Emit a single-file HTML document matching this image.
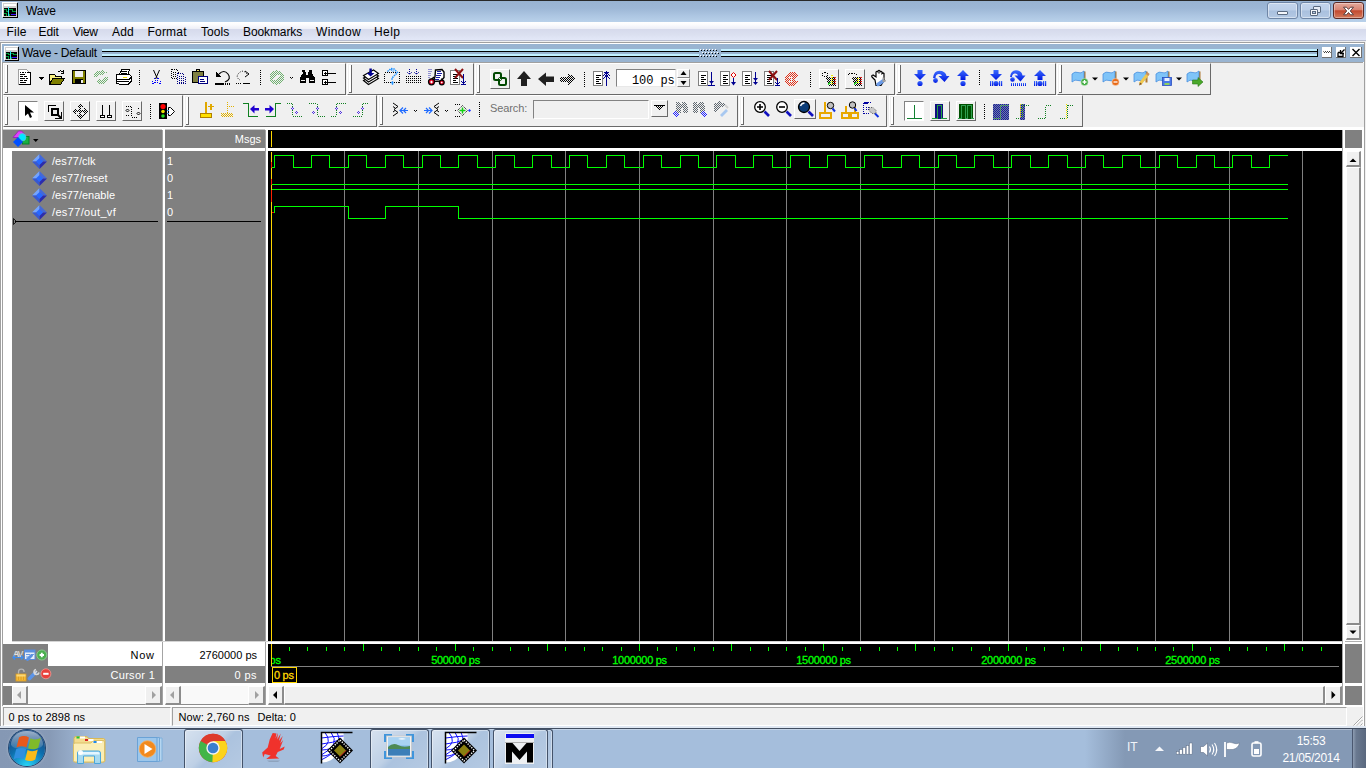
<!DOCTYPE html>
<html><head><meta charset="utf-8"><title>Wave</title>
<style>
*{box-sizing:border-box;margin:0;padding:0}
html,body{width:1366px;height:768px;overflow:hidden;background:#f0f0f0;font-family:"Liberation Sans",sans-serif;font-size:11px;color:#000}
.a{position:absolute}
.t{position:absolute;white-space:nowrap;line-height:1}
svg{position:absolute;overflow:visible}
.gray{background:#808080}
.blk{background:#000}
.wht{background:#fff}
#title{left:0;top:0;width:1366px;height:22px;background:linear-gradient(#98b3d2 0,#9db7d6 35%,#adc6e2 70%,#b9d1ea 100%);border-top:1px solid #282828}
#menu{left:0;top:22px;width:1366px;height:18px;background:linear-gradient(#ffffff 0,#fbfbfd 15%,#eceef7 40%,#d6daec 41%,#dbe0f0 70%,#e3e8f8 100%)}
.mi{top:26px;font-size:12px}
#pane{left:2px;top:43px;width:1362px;height:19px;background:#99b4d1;border-top:1px solid #fff}
.tb{position:absolute;height:32px;border-top:1px solid #fff;border-left:1px solid #fff;border-right:1px solid #696969;border-bottom:1px solid #696969;background:#f0f0f0}
.hd{position:absolute;left:1px;top:1px;width:3px;height:28px;background:#696969;border-left:2px solid #fff}
.hd:after{content:"";position:absolute;left:-2px;bottom:0;width:3px;height:1px;background:#696969}
.btn{position:absolute;width:20px;height:20px;border-top:1px solid #fff;border-left:1px solid #fff;border-right:1px solid #696969;border-bottom:1px solid #696969;background:#f0f0f0}
.sep{position:absolute;width:1px;height:15px;background:repeating-linear-gradient(#000 0,#000 1px,transparent 1px,transparent 2px)}
.tl{font-size:11px;color:#00ff00;letter-spacing:-0.3px;-webkit-text-stroke:0.3px #00ff00}
.sn{font-size:11px;color:#fff}
.sbb{width:16px;height:18px;background:#f0f0f0;border-top:1px solid #fff;border-left:1px solid #fff;border-right:1px solid #808080;border-bottom:1px solid #808080}
.tbtn{top:729px;height:40px;border:1px solid #44536a;border-bottom:none;border-radius:3px 3px 0 0;background:linear-gradient(135deg,rgba(255,255,255,.55) 0,rgba(255,255,255,.28) 45%,rgba(255,255,255,.08) 55%,rgba(255,255,255,.18) 100%),#a5bedc;box-shadow:inset 0 0 0 1px rgba(255,255,255,.4)}
.vsb{width:15px;background:#f0f0f0;border-top:1px solid #fff;border-left:1px solid #fff;border-right:2px solid #8c8c8c;border-bottom:2px solid #8c8c8c}
.hsb{height:19px;background:#f0f0f0;border-top:1px solid #fff;border-left:1px solid #fff;border-right:2px solid #8c8c8c;border-bottom:2px solid #8c8c8c}
</style></head><body>
<!-- TITLE BAR -->
<div class="a" id="title"></div>
<svg style="left:2px;top:2px" width="16" height="16" viewBox="0 0 16 16" shape-rendering="crispEdges">
<rect x="0" y="0" width="15" height="15" fill="#fff"/><rect x="1" y="1" width="15" height="15" fill="#000"/>
<rect x="1" y="1" width="14" height="14" fill="#d0d0d0"/>
<rect x="2" y="2" width="12" height="2" fill="#fff"/>
<rect x="2" y="6" width="12" height="8" fill="#000"/>
<path d="M2 7.500h3M4.500 7v3M4 9.500h2M7 7.500h4M10.500 7v3M10 9.500h4M2 11.500h3M4.500 11v3M7.500 12v2" stroke="#00a040" fill="none" stroke-width="1"/>
<rect x="6" y="5" width="1" height="9" fill="#30e0f0"/>
<rect x="9" y="12" width="5" height="1" fill="#4010ff"/>
</svg>
<div class="t" style="left:26px;top:5px;font-size:12px;letter-spacing:-0.1px">Wave</div>
<!-- window buttons -->
<div class="a" style="left:1267px;top:2px;width:31px;height:17px;border:1px solid #6f86a6;border-radius:3px;background:linear-gradient(#c3d5ec 0,#bccfe8 48%,#a9c0de 52%,#b4c9e4 100%);box-shadow:inset 0 0 0 1px rgba(255,255,255,.45)"></div>
<div class="a" style="left:1277px;top:11px;width:11px;height:4px;border:1px solid #5a6a80;border-radius:1px;background:#f4f6fa"></div>
<div class="a" style="left:1300px;top:2px;width:31px;height:17px;border:1px solid #6f86a6;border-radius:3px;background:linear-gradient(#c3d5ec 0,#bccfe8 48%,#a9c0de 52%,#b4c9e4 100%);box-shadow:inset 0 0 0 1px rgba(255,255,255,.45)"></div>
<div class="a" style="left:1313px;top:6px;width:8px;height:7px;border:1px solid #5a6a80;border-radius:1px;background:#e6ecf5"></div>
<div class="a" style="left:1310px;top:9px;width:8px;height:7px;border:1px solid #5a6a80;border-radius:1px;background:#f4f6fa"></div>
<div class="a" style="left:1312px;top:11px;width:4px;height:3px;border:1px solid #5a6a80;background:#b8cbe4"></div>
<div class="a" style="left:1333px;top:2px;width:31px;height:17px;border:1px solid #5c2a26;border-radius:3px;background:linear-gradient(#e3a99c 0,#d98573 45%,#c3492f 52%,#d37a5c 100%);box-shadow:inset 0 0 0 1px rgba(255,255,255,.35)"></div>
<svg style="left:1342px;top:6px" width="13" height="10" viewBox="0 0 13 10"><path d="M1.5 1.2h3l2 2.2 2-2.2h3L8.3 5l3.2 3.8h-3l-2-2.3-2 2.3h-3L4.7 5z" fill="#fff" stroke="#5b4040" stroke-width="1"/></svg>
<!-- MENU -->
<div class="a" id="menu"></div>
<div class="a" style="left:0;top:40px;width:1366px;height:1px;background:#b8bdd0"></div>
<div class="a" style="left:0;top:41px;width:1366px;height:1px;background:#f0f0f0"></div>
<div class="t mi" style="left:6.500px;letter-spacing:0.2px">File</div>
<div class="t mi" style="left:38.500px;letter-spacing:-0.1px">Edit</div>
<div class="t mi" style="left:73px;letter-spacing:-0.3px">View</div>
<div class="t mi" style="left:112px;letter-spacing:0.2px">Add</div>
<div class="t mi" style="left:147.500px;letter-spacing:0.2px">Format</div>
<div class="t mi" style="left:201px;letter-spacing:0.05px">Tools</div>
<div class="t mi" style="left:243px;letter-spacing:-0.1px">Bookmarks</div>
<div class="t mi" style="left:316px;letter-spacing:0.4px">Window</div>
<div class="t mi" style="left:374px;letter-spacing:0.45px">Help</div>
<!-- PANE TITLE -->
<div class="a" style="left:0;top:42px;width:1365px;height:1px;background:#a0a0a0"></div>
<div class="a" style="left:0;top:42px;width:1px;height:686px;background:#a0a0a0"></div>
<div class="a" style="left:1px;top:43px;width:1px;height:684px;background:#fff"></div>
<div class="a" style="left:1364px;top:42px;width:1px;height:686px;background:#a0a0a0"></div>
<div class="a" style="left:1363px;top:62px;width:1px;height:665px;background:#fff"></div>
<div class="a" style="left:2px;top:62px;width:1361px;height:1px;background:#a0a0a0"></div>
<div class="a" style="left:2px;top:62px;width:1px;height:644px;background:#a0a0a0"></div>
<div class="a" id="pane"></div>
<svg style="left:4px;top:46px" width="15" height="15" viewBox="0 0 16 16" preserveAspectRatio="none" shape-rendering="crispEdges">
<rect x="0" y="0" width="15" height="15" fill="#fff"/><rect x="1" y="1" width="15" height="15" fill="#000"/>
<rect x="1" y="1" width="14" height="14" fill="#d0d0d0"/>
<rect x="2" y="2" width="12" height="2" fill="#fff"/>
<rect x="2" y="6" width="12" height="8" fill="#000"/>
<path d="M2 7.500h3M4.500 7v3M4 9.500h2M7 7.500h4M10.500 7v3M10 9.500h4M2 11.500h3M4.500 11v3M7.500 12v2" stroke="#00a040" fill="none" stroke-width="1"/>
<rect x="6" y="5" width="1" height="9" fill="#30e0f0"/>
<rect x="9" y="12" width="5" height="1" fill="#4010ff"/>
</svg>
<div class="t" style="left:22px;top:47px;font-size:12px;letter-spacing:-0.3px">Wave - Default</div>
<!-- title stripes -->
<div class="a" style="left:102px;top:49px;width:1216px;height:2px;background:#c2f0ff"></div>
<div class="a" style="left:102px;top:51px;width:1216px;height:1px;background:#000"></div>
<div class="a" style="left:102px;top:54px;width:1216px;height:2px;background:#c2f0ff"></div>
<div class="a" style="left:102px;top:56px;width:1216px;height:1px;background:#000"></div>
<div class="a" style="left:1317px;top:49px;width:1px;height:8px;background:#000"></div>
<div class="a" style="left:699px;top:48px;width:22px;height:10px;background:#99b4d1"></div>
<svg style="left:700px;top:49px" width="20" height="9" viewBox="0 0 20 9" shape-rendering="crispEdges">
<g fill="#fff"><rect x="0" y="0" width="1" height="1"/><rect x="3" y="0" width="1" height="1"/><rect x="6" y="0" width="1" height="1"/><rect x="9" y="0" width="1" height="1"/><rect x="12" y="0" width="1" height="1"/><rect x="15" y="0" width="1" height="1"/>
<rect x="1.500" y="3" width="1" height="1"/><rect x="4.500" y="3" width="1" height="1"/><rect x="7.500" y="3" width="1" height="1"/><rect x="10.500" y="3" width="1" height="1"/><rect x="13.500" y="3" width="1" height="1"/><rect x="16.500" y="3" width="1" height="1"/>
<rect x="0" y="6" width="1" height="1"/><rect x="3" y="6" width="1" height="1"/><rect x="6" y="6" width="1" height="1"/><rect x="9" y="6" width="1" height="1"/><rect x="12" y="6" width="1" height="1"/><rect x="15" y="6" width="1" height="1"/></g>
<g fill="#000"><rect x="1" y="1" width="1" height="1"/><rect x="4" y="1" width="1" height="1"/><rect x="7" y="1" width="1" height="1"/><rect x="10" y="1" width="1" height="1"/><rect x="13" y="1" width="1" height="1"/><rect x="16" y="1" width="1" height="1"/>
<rect x="2.500" y="4" width="1" height="1"/><rect x="5.500" y="4" width="1" height="1"/><rect x="8.500" y="4" width="1" height="1"/><rect x="11.500" y="4" width="1" height="1"/><rect x="14.500" y="4" width="1" height="1"/><rect x="17.500" y="4" width="1" height="1"/>
<rect x="1" y="7" width="1" height="1"/><rect x="4" y="7" width="1" height="1"/><rect x="7" y="7" width="1" height="1"/><rect x="10" y="7" width="1" height="1"/><rect x="13" y="7" width="1" height="1"/><rect x="16" y="7" width="1" height="1"/></g>
</svg>
<!-- pane buttons -->
<div class="a" style="left:1322px;top:47px;width:10px;height:11px;background:#fff;border-right:1px solid #707070;border-bottom:1px solid #707070"></div>
<div class="a" style="left:1336px;top:47px;width:10px;height:11px;background:#fff;border-right:1px solid #707070;border-bottom:1px solid #707070"></div>
<div class="a" style="left:1350px;top:47px;width:12px;height:11px;background:#fff;border-right:1px solid #707070;border-bottom:1px solid #707070"></div>
<svg style="left:1322px;top:47px" width="40" height="11" viewBox="0 0 40 11">
<path d="M1.5 4.5l1 1 1-1 1 1 1-1 1 1 1-1 1 1" stroke="#000" fill="none" stroke-width="1"/>
<path d="M16 5.5h3.5M16 5.5v4h5v-3M18.5 6.5l4-4M18.5 3v3.5h3.5" stroke="#000" fill="none" stroke-width="1.3"/>
<path d="M30.5 2l7 7M37.500 2l-7 7" stroke="#000" fill="none" stroke-width="1.4"/>
</svg>
<!-- TOOLBAR FRAMES -->
<div class="a" style="left:3px;top:63px;width:1361px;height:64px;background:#f0f0f0"></div>
<div class="tb" style="left:3px;top:63px;width:343px"><i class="hd"></i></div>
<div class="tb" style="left:347px;top:63px;width:127px"><i class="hd"></i></div>
<div class="tb" style="left:475px;top:63px;width:420px"><i class="hd"></i></div>
<div class="tb" style="left:896px;top:63px;width:160px"><i class="hd"></i></div>
<div class="tb" style="left:1057px;top:63px;width:154px"><i class="hd"></i></div>
<div class="tb" style="left:3px;top:95px;width:180px"><i class="hd"></i></div>
<div class="tb" style="left:184px;top:95px;width:193px"><i class="hd"></i></div>
<div class="tb" style="left:378px;top:95px;width:360px"><i class="hd"></i></div>
<div class="tb" style="left:739px;top:95px;width:148px"><i class="hd"></i></div>
<div class="tb" style="left:889px;top:95px;width:194px"><i class="hd"></i></div>
<!-- separators row1 -->
<i class="sep" style="left:139px;top:70px"></i><i class="sep" style="left:260px;top:70px"></i>
<i class="sep" style="left:584px;top:72px"></i><i class="sep" style="left:810px;top:72px"></i><i class="sep" style="left:979px;top:70px"></i>
<!-- buttons row1 -->
<div class="btn" style="left:490px;top:69px"></div>
<div class="btn" style="left:819px;top:69px"></div>
<div class="btn" style="left:845px;top:69px"></div>
<!-- entry 100 ps -->
<div class="a" style="left:616px;top:69px;width:60px;height:18px;background:#fff;border-top:1px solid #828282;border-left:1px solid #828282;border-right:1px solid #e8e8e8;border-bottom:1px solid #e8e8e8"></div>
<div class="t" style="left:632px;top:75px;font-family:'Liberation Mono',monospace;font-size:12px;white-space:pre;letter-spacing:-0.1px">100 ps</div>
<div class="a" style="left:677px;top:69px;width:13px;height:9px;background:#f0f0f0;border-top:1px solid #fff;border-left:1px solid #fff;border-right:1px solid #828282;border-bottom:1px solid #828282"></div>
<div class="a" style="left:677px;top:78px;width:13px;height:9px;background:#f0f0f0;border-top:1px solid #fff;border-left:1px solid #fff;border-right:1px solid #828282;border-bottom:1px solid #828282"></div>
<!-- ROW 1 ICONS -->
<svg style="left:0;top:63px" width="1366" height="32" viewBox="0 63 1366 32" shape-rendering="crispEdges">
<defs>
<pattern id="dg" width="2" height="2" patternUnits="userSpaceOnUse"><rect width="1" height="1" fill="#6fb06f"/><rect x="1" y="1" width="1" height="1" fill="#6fb06f"/></pattern>
<pattern id="dk" width="2" height="2" patternUnits="userSpaceOnUse"><rect width="1" height="1" fill="#000"/><rect x="1" y="1" width="1" height="1" fill="#000"/></pattern>
<pattern id="dr" width="2" height="2" patternUnits="userSpaceOnUse"><rect width="1" height="1" fill="#e03018"/><rect x="1" y="1" width="1" height="1" fill="#e03018"/></pattern>
<pattern id="db" width="2" height="2" patternUnits="userSpaceOnUse"><rect width="1" height="1" fill="#000080"/><rect x="1" y="1" width="1" height="1" fill="#000080"/></pattern>
<pattern id="dgy" width="2" height="2" patternUnits="userSpaceOnUse"><rect width="1" height="1" fill="#606060"/><rect x="1" y="1" width="1" height="1" fill="#606060"/></pattern>
<g id="doc"><rect x="0" y="0" width="9" height="14" fill="#fff" stroke="#808080" stroke-width="1"/><path d="M2 3.500h5M2 5.500h3M2 7.500h5M2 9.500h3M2 11.500h5" stroke="#000" stroke-width="1"/></g>
</defs>
<!-- new doc -->
<path d="M18.500 69.500h8l4 4v11h-12z" fill="#fff" stroke="#a0a0a0" stroke-width="1"/><path d="M27 72.500h3.500v12h-11.500" fill="none" stroke="#000" stroke-width="1"/>

<path d="M20 72.500h1M22 72.500h2M25 72.500h1M20 74.500h5M20 76.500h3M24 76.500h3M20 78.500h5M26 78.500h2M20 80.500h3M24 80.500h3M20 82.500h6" stroke="#000" stroke-width="1"/>
<path d="M38 77h6l-3 3z" fill="#000"/>
<!-- open folder -->
<path d="M49.500 74.500h5l1 1.500h6v3h-9l-3 5z" fill="#f8f080" stroke="#000" stroke-width="1"/>
<path d="M49.500 84.500l3.500-6h11.500l-4 6z" fill="#808000" stroke="#000" stroke-width="1"/>
<path d="M57.500 72.500q2.500-3 5.500-.5M63.500 70v3h-3" stroke="#000" stroke-width="1" fill="none"/>
<!-- save -->
<rect x="72.500" y="70.500" width="13" height="13" fill="#808000" stroke="#000" stroke-width="1"/>
<rect x="75" y="71" width="8" height="6" fill="#f0f0f0"/><rect x="75" y="79" width="8" height="5" fill="#000"/><rect x="81" y="80" width="2" height="3" fill="#f0f0f0"/>
<!-- refresh dithered -->
<path d="M93 77l2-4.500 3-2h4v-2l4.500 4-4.500 4v-2h-3l-3 2.500zM109 77l-2 4.500-3 2h-4v2l-4.500-4 4.500-4v2h3l3-2.500z" fill="url(#dg)"/>
<!-- print -->
<path d="M119.500 74.500l2-5h8l-1.500 5" fill="#fff" stroke="#000" stroke-width="1"/>
<path d="M121 71.500h6M120.500 73.500h6" stroke="#000" stroke-width="1"/>
<path d="M116.500 75.500q0-1.500 2-1.500h10l2.500 2v5.500l-2.500 2.500h-10q-2 0-2-2z" fill="#fff" stroke="#000" stroke-width="1"/>
<path d="M116.500 79.500h12.500l2-2M116.500 81.500h12" stroke="#000" stroke-width="1" fill="none"/>
<rect x="123" y="77" width="4" height="1" fill="#f0e000"/>
<!-- cut -->
<path d="M153.500 70l4 9M159.500 70l-4 9" stroke="#000" stroke-width="1" shape-rendering="auto"/>
<path d="M155 78.500l-2.500 2 .5 3 2.500-1zM158 78.500l2.500 2-.5 3-2.500-1z" fill="none" stroke="#0000ff" stroke-width="1" stroke-dasharray="1 1"/>
<!-- copy dithered -->
<path d="M171.500 69.500h5l2 2v7h-7z" fill="none" stroke="#000" stroke-width="1" stroke-dasharray="1 1"/><path d="M173 72.500h4M173 74.500h4M173 76.500h4" stroke="#000" stroke-width="1" stroke-dasharray="1 1"/><path d="M177.500 73.500h5l3 3v7h-8z" fill="#f0f0f0" stroke="#000080" stroke-width="1" stroke-dasharray="1 1"/><path d="M179 76.500h6M179 78.500h6M179 80.500h6M179 82.500h6" stroke="#000080" stroke-width="1" stroke-dasharray="1 1"/>
<!-- paste -->
<rect x="192.500" y="71.500" width="11" height="11" fill="#808040" stroke="#000" stroke-width="1"/>
<path d="M195.500 71.500l1.500-2h2l1.500 2z" fill="#f0e060" stroke="#000" stroke-width="1"/>
<rect x="198.500" y="76.500" width="9" height="7" fill="#fff" stroke="#000080" stroke-width="1"/>
<path d="M200 79.500h4M200 81.500h5" stroke="#000080" stroke-width="1"/>
<!-- undo -->
<path d="M219 74q5-5 9 0t-3 8" stroke="#000" stroke-width="1.200" fill="none" shape-rendering="auto"/>
<path d="M216 72v5h5z" fill="#000"/><rect x="215" y="83" width="9" height="2" fill="#000"/>
<path d="M225 83.500h6" stroke="#000" stroke-width="2" stroke-dasharray="1 1"/>
<!-- redo dotted -->
<path d="M247 74q-4-5-8-1t1 7" stroke="#000" stroke-width="1" fill="none" stroke-dasharray="1 1.500" shape-rendering="auto"/>
<path d="M245 71l4 3-4 3" stroke="#000" stroke-width="1" fill="none" shape-rendering="auto"/>
<path d="M236 83.500h6" stroke="#000" stroke-width="1" stroke-dasharray="1 1"/><path d="M243 83l1 1 1-1 1 1 1-1 1 1 1-1 1 1" stroke="#000" stroke-width="1" fill="none" shape-rendering="auto"/>
<!-- green circle dithered -->
<circle cx="277" cy="77.500" r="7.200" fill="url(#dg)"/><path d="M273 80l3.500-5h4l-3.500 5z" fill="#f0f0f0"/>
<path d="M290 77l1.500 1.500 1.500-1.500" stroke="#000" stroke-width="1" fill="none" shape-rendering="auto"/>
<!-- binoculars -->
<path d="M302 70h3v2h1v3h2v-3h1v-2h3v3l3 5v5h-6v-5h-3v5h-6v-5l3-5z" fill="#000"/>
<rect x="301" y="80" width="4" height="1" fill="#f0f0f0"/><rect x="310" y="80" width="4" height="1" fill="#f0f0f0"/>
<!-- tree -->
<rect x="322.500" y="70.500" width="5" height="5" fill="#fff" stroke="#000" stroke-width="1"/><rect x="322.500" y="79.500" width="5" height="5" fill="#fff" stroke="#000" stroke-width="1"/>
<path d="M324 73h3M325.500 71.500v3M324 82h3M325.500 80.500v3M328 73.500h8M328 82.500h8" stroke="#000" stroke-width="1"/>
</svg>
<svg style="left:0;top:63px" width="1366" height="32" viewBox="0 63 1366 32" shape-rendering="crispEdges">
<!-- G2: stack with arrow -->
<g shape-rendering="auto">
<path d="M363.500 80.500l10-5.500 5 3.500-10 6z" fill="#fff" stroke="#000" stroke-width="1.100"/>
<path d="M363.500 78l10-5.500 5 3.500-10 6z" fill="#fff" stroke="#000" stroke-width="1.100"/>
<path d="M363.500 75.500l10-5.500 5 3.500-10 6z" fill="#fff" stroke="#000" stroke-width="1.100"/>
<path d="M369.400 68.500h2.400v4.500h2.700l-3.900 3.500-3.900-3.500h2.700z" fill="#000090"/>
</g>
<!-- dotted box ? -->
<rect x="384.500" y="72.500" width="15" height="10" fill="none" stroke="#000" stroke-width="1" stroke-dasharray="1 1"/>
<path d="M387.500 71.500l3-2.500 3 2.500M391 68.500l3 .5 3.500 3.500-5.500 5.500v2M392.500 82l-1 1 1 1 1-1z" stroke="#1e90ff" stroke-width="1.500" fill="none" stroke-dasharray="1.500 0.800" shape-rendering="auto"/>
<!-- dotted grid arrows -->
<path d="M406 76.500h15M406 78.500h15M406 80.500h15M406 82.500h15" stroke="#000" stroke-width="1" stroke-dasharray="1 1"/>
<path d="M409.500 69v5M416.500 69v5M407 72l2.500 2.500 2.500-2.500M414 72l2.500 2.500 2.500-2.500" stroke="#000090" stroke-width="1" fill="none" stroke-dasharray="1 1" shape-rendering="auto"/>
<!-- cart -->
<g shape-rendering="auto">
<path d="M435.500 70l6.500-.5 2 2.500v5.500l-3 3.500-7.500.5 1.500-5z" fill="#fff" stroke="#000" stroke-width="1.400"/>
<path d="M431 80l3-3M442.500 80.500l-1-2" stroke="#000" stroke-width="1.500"/>
<circle cx="431.500" cy="81.800" r="3" fill="#e00020" stroke="#000" stroke-width="1.200"/><circle cx="441.800" cy="82.500" r="2.400" fill="#e00020" stroke="#000" stroke-width="1.200"/>
<rect x="430.500" y="81" width="2" height="2" fill="#fff" transform="rotate(45 431.500 82)"/><rect x="441" y="81.800" width="1.500" height="1.500" fill="#fff" transform="rotate(45 441.800 82.500)"/>
</g>
<path d="M437 71.500h4M437 73.500h5M436 75.500h5M436 77.500h4M435 79.500h4" stroke="#1818a0" stroke-width="1"/>
<path d="M428 69.500h4M428 71.500h4M428 73.500h3M428 75.500h3M428 77.500h2" stroke="#9090d0" stroke-width="1"/>
<!-- doc with X -->
<use href="#doc" x="450.500" y="70.500"/>
<path d="M455 69l8 9M463 69l-8 9" stroke="#8b1010" stroke-width="2" shape-rendering="auto"/>
<path d="M463.500 74v9M461 84.500h5M461 81l2.500 2.500 2.500-2.500" stroke="#000090" stroke-width="1" fill="none"/>
<!-- G3: linked squares -->
<g shape-rendering="auto"><rect x="494" y="73" width="7" height="7" rx="1.500" fill="none" stroke="#004800" stroke-width="2"/><rect x="499" y="78" width="7" height="7" rx="1.500" fill="none" stroke="#004800" stroke-width="2"/><path d="M498.500 77.500l3 3" stroke="#f0f0f0" stroke-width="1"/></g>
<!-- arrows -->
<path d="M524 71l7 8h-4v7h-6v-7h-4z" fill="#202020" shape-rendering="auto"/>
<path d="M538 79l8-6.500v4h8v5.500h-8v4z" fill="#202020" shape-rendering="auto"/>
<path d="M576 79l-8-6.500v4h-8v5.500h8v4z" fill="url(#dk)"/>
<!-- doc+up arrow -->
<use href="#doc" x="593.500" y="71.500" />
<path d="M606.500 86v-14M603 76l3.500-4 3.500 4M603 79l3.500-4 3.500 4M604 72.500h5" stroke="#000090" stroke-width="1" fill="none"/>
<!-- spinner arrows -->
<path d="M683.500 71l3 4h-6zM683.500 85l3-4h-6z" fill="#000" shape-rendering="auto"/>
<!-- doc + arrows -->
<use href="#doc" x="698.500" y="71.500"/>
<path d="M711.500 72v13M708 85.500h7" stroke="#000090" stroke-width="1" fill="none"/><path d="M709 81h5l-2.500 3z" fill="#000090" shape-rendering="auto"/>
<use href="#doc" x="720.500" y="71.500"/>
<path d="M733.500 78v6" stroke="#000090" stroke-width="1"/><path d="M731 82h5l-2.500 3.500z" fill="#000090" shape-rendering="auto"/>
<path d="M733.500 72.500l2.500 2.500-2.500 2.500-2.500-2.500z" fill="#fff" stroke="#e00000" stroke-width="1" shape-rendering="auto"/>
<use href="#doc" x="742.500" y="71.500"/>
<path d="M755.500 72v12" stroke="#000090" stroke-width="1"/><path d="M753 78h5l-2.500 3zM753 82h5l-2.500 3z" fill="#000090" shape-rendering="auto"/>
<use href="#doc" x="764.500" y="71.500"/>
<path d="M769 71l8 9M777 71l-8 9" stroke="#8b1010" stroke-width="2" shape-rendering="auto"/>
<path d="M777.500 78v7M775 85.500h5M775 82l2.500 2.500 2.500-2.500" stroke="#000090" stroke-width="1" fill="none"/>
<!-- red C dithered -->
<circle cx="792" cy="79" r="7" fill="url(#dr)"/><path d="M799 76l-5 3 5 3z" fill="#f0f0f0"/><path d="M789 77h2v4h-2M793 78h1M793 80h1" stroke="#f0f0f0" stroke-width="1" fill="none"/>
<!-- button icons dithered -->
<circle cx="825" cy="74.500" r="2.500" fill="none" stroke="#000" stroke-width="1" stroke-dasharray="1 1"/>
<path d="M826 77h10v9h-7z" fill="url(#dk)"/><path d="M831.500 75v9" stroke="#f0f000" stroke-width="2" stroke-dasharray="1 1"/><path d="M835 77v7" stroke="#e02020" stroke-width="2" stroke-dasharray="1 1"/><path d="M828 84l2.500-2" stroke="#20d020" stroke-width="1.500"/>
<path d="M848 75q1-3 3-1 1-2 3 0 2-1 3 1" fill="none" stroke="#000" stroke-width="1" stroke-dasharray="1 1"/>
<path d="M852 77h10v9h-7z" fill="url(#dk)"/><path d="M857.500 78v6" stroke="#f0f000" stroke-width="2" stroke-dasharray="1 1"/><path d="M861 77v7" stroke="#e02020" stroke-width="2" stroke-dasharray="1 1"/><path d="M854 84l2.500-2" stroke="#20d020" stroke-width="1.500"/>
<!-- hand -->
<g shape-rendering="auto">
<path d="M875 80l-3-3q-1-1.500 1-2l3 2v-5q1-1.500 2 0v-1q1-1.500 2 0v1q1-1.500 2 0v1.500q1-1 2 0v7l-3 5h-5z" fill="#fff" stroke="#000" stroke-width="1.200"/>
<path d="M878 84.500l5-3.500" stroke="#6a9ae8" stroke-width="3.500" stroke-linecap="round"/>
<path d="M883.500 77.500v3.500h2" stroke="#a0a0a0" stroke-width="2"/>
</g>
</svg>
<svg style="left:0;top:63px" width="1366" height="32" viewBox="0 63 1366 32">
<defs><linearGradient id="bl" x1="0" y1="0" x2="0" y2="1"><stop offset="0" stop-color="#3c6cff"/><stop offset="1" stop-color="#0018e0"/></linearGradient></defs>
<!-- G4 step icons -->
<g fill="url(#bl)">
<path d="M917.500 70h5v4h3.500l-6 6-6-6h3.500z"/><circle cx="920" cy="83.500" r="2.600"/>
<path d="M933 78q1-9 9-7 4 1.500 4.500 5h3l-5 6-6-6h3.500q-1-2.500-3.500-2-3 .5-3 4z"/><circle cx="935.500" cy="80.500" r="2.400"/>
<path d="M960.500 80h5v-4h3.500l-6-6-6 6h3.500z"/><circle cx="963" cy="83.500" r="2.600"/>
<path d="M993.500 70h5v4h3.500l-6 6-6-6h3.500z"/><circle cx="996" cy="83.500" r="2.600"/>
<path d="M990 81h1.200v5h-1.200zM992 81h1.200v5h-1.200zM999 81h1.200v5h-1.200zM1001 81h1.200v5h-1.200z"/>
<path d="M1010 77q1-8 8-6.500 4 1 4.500 5h3l-5 6-6-6h3.500q-1-2.500-3.500-2-2.500.5-2.500 3.500z"/><circle cx="1012.500" cy="79.500" r="2.300"/>
<path d="M1011 83h1v3h-1zM1013 83h1v3h-1zM1015 83h1v3h-1zM1017 83h1v3h-1zM1019 83h1v3h-1zM1021 83h1v3h-1zM1023 83h1v3h-1zM1025 83h1v3h-1z"/>
<path d="M1037.500 80h5v-4h3.500l-6-6-6 6h3.500z"/><circle cx="1040" cy="83.500" r="2.600"/>
<path d="M1034 81h1.200v5h-1.200zM1036 81h1.200v5h-1.200zM1043 81h1.200v5h-1.200zM1045 81h1.200v5h-1.200z"/>
</g>
<!-- G5 bookmark flags -->
<g id="flag"><path d="M1084.500 71.500v11" stroke="#b07830" stroke-width="2"/><path d="M1072 74q3-3 6-1.500t6-1.500v8q-3 3-6 1.500t-6 1.500z" fill="#7fc4f8" stroke="#4a90e0" stroke-width="0.800"/></g>
<circle cx="1084.500" cy="82" r="3.600" fill="#3aa83a" stroke="#c0e8c0" stroke-width="0.600"/><path d="M1082.500 82h4M1084.500 80v4" stroke="#fff" stroke-width="1.300"/>
<path d="M1092 77.500h6l-3 3z" fill="#000"/>
<use href="#flag" x="31"/>
<circle cx="1115.500" cy="82" r="3.600" fill="#e86a18" stroke="#f8d0b0" stroke-width="0.600"/><path d="M1113.500 82h4" stroke="#fff" stroke-width="1.300"/>
<path d="M1123 77.500h6l-3 3z" fill="#000"/>
<use href="#flag" x="62"/>
<path d="M1140 84l7.500-9.500" stroke="#f0c850" stroke-width="3"/><path d="M1139 85.500l1-3 2 1.500z" fill="#805020"/><path d="M1147 75l1.500-2" stroke="#c89060" stroke-width="3"/>
<use href="#flag" x="84"/>
<rect x="1162.500" y="77.500" width="9" height="8" fill="#4a78e8" stroke="#2a50c0" stroke-width="0.800"/><rect x="1164.500" y="78" width="5" height="3" fill="#e8f0ff"/><rect x="1164.500" y="83" width="5" height="2" fill="#90d060"/>
<path d="M1176 77.500h6l-3 3z" fill="#000"/>
<use href="#flag" x="115"/>
<path d="M1192.500 80h5.500v-2.500l5 4.500-5 4.500v-2.500h-5.500z" fill="#4aa82a" stroke="#2a7818" stroke-width="0.600"/>
</svg>
<!-- ROW 2 -->
<div class="btn" style="left:18px;top:101px;background:#fff;border-top-color:#828282;border-left-color:#828282;border-right-color:#fff;border-bottom-color:#fff"></div>
<div class="btn" style="left:44px;top:101px"></div>
<div class="btn" style="left:70px;top:101px"></div>
<div class="btn" style="left:96px;top:101px"></div>
<div class="btn" style="left:122px;top:101px"></div>
<div class="btn" style="left:794px;top:99px;width:22px;height:20px"></div>
<div class="btn" style="left:904px;top:101px;background:#fff;border-top-color:#828282;border-left-color:#828282;border-right-color:#fff;border-bottom-color:#fff"></div>
<div class="btn" style="left:930px;top:101px"></div>
<div class="btn" style="left:956px;top:101px"></div>
<i class="sep" style="left:150px;top:104px"></i><i class="sep" style="left:479px;top:102px"></i><i class="sep" style="left:984px;top:104px"></i>
<div class="t" style="left:490px;top:103px;font-size:11px;color:#707070;letter-spacing:-0.1px">Search:</div>
<div class="a" style="left:533px;top:100px;width:116px;height:19px;background:#f0f0f0;border-top:1px solid #828282;border-left:1px solid #828282;border-right:1px solid #fff;border-bottom:1px solid #fff"></div>
<div class="btn" style="left:651px;top:100px;width:17px;height:17px"></div>
<svg style="left:0;top:95px" width="1366" height="32" viewBox="0 95 1366 32" shape-rendering="crispEdges">
<defs>
<pattern id="dk2b" width="2" height="2" patternUnits="userSpaceOnUse"><rect width="1" height="1" fill="#000"/><rect x="1" y="1" width="1" height="1" fill="#000"/></pattern>
<pattern id="dk2" width="2" height="2" patternUnits="userSpaceOnUse"><rect width="1" height="1" fill="#606870"/><rect x="1" y="1" width="1" height="1" fill="#606870"/></pattern><pattern id="dbl" width="2" height="2" patternUnits="userSpaceOnUse"><rect width="1" height="1" fill="#2020ff"/><rect x="1" y="1" width="1" height="1" fill="#2020ff"/></pattern>
<pattern id="db2" width="2" height="2" patternUnits="userSpaceOnUse"><rect width="1" height="1" fill="#1818a0"/><rect x="1" y="1" width="1" height="1" fill="#1818a0"/><rect x="1" y="0" width="1" height="1" fill="#7080a0"/><rect x="0" y="1" width="1" height="1" fill="#7080a0"/></pattern>
<pattern id="dy2" width="2" height="2" patternUnits="userSpaceOnUse"><rect width="1" height="1" fill="#e0b000"/><rect x="1" y="1" width="1" height="1" fill="#e0b000"/></pattern>
</defs>
<!-- pointer -->
<path d="M25 105v11l3-2.500 2 4.500 2-1-2-4.500h4z" fill="#000" shape-rendering="auto"/>
<!-- zoom box -->
<path d="M48.500 112v-6.500h7" stroke="#000" stroke-width="1" fill="none"/><rect x="52" y="109" width="6" height="6" fill="#e8e8e8" stroke="#000" stroke-width="2"/>
<path d="M58 115l3 3" stroke="#000" stroke-width="2" fill="none" shape-rendering="auto"/><path d="M61.500 112v6.500h-6.500" stroke="#000" stroke-width="1.500" fill="none"/>
<!-- move (dotted 4-arrow) -->
<path d="M80 103l4 4h-3v3h3v-3l4 4-4 4v-3h-3v3h3l-4 4-4-4h3v-3h-3v3l-4-4 4-4v3h3v-3h-3z" fill="url(#dk2b)"/>
<!-- two cursors -->
<path d="M102.500 105v11M109.500 105v11" stroke="#000" stroke-width="1"/><rect x="100.500" y="115.500" width="4" height="2" fill="#fff" stroke="#000" stroke-width="1"/><rect x="107.500" y="115.500" width="4" height="2" fill="#fff" stroke="#000" stroke-width="1"/>
<!-- dotted edge -->
<path d="M126 106.500h5M131.500 107v10M132 117.500h6M126 115.500h3" stroke="#000" stroke-width="1" stroke-dasharray="1 1"/>
<path d="M127.500 109l1.500 1.500-1.500 1.500-1.500-1.500zM138.500 112l1.500 1.500-1.500 1.500-1.500-1.500z" fill="none" stroke="#000" stroke-width="1" shape-rendering="auto"/><rect x="138" y="108" width="1" height="1" fill="#000"/>
<!-- traffic light -->
<rect x="159" y="103" width="8" height="16" fill="#000"/>
<circle cx="163" cy="106.500" r="2.600" fill="#ff0000" shape-rendering="auto"/><circle cx="163" cy="111.500" r="1.800" fill="#e8e000" shape-rendering="auto"/><circle cx="163" cy="116" r="1.800" fill="#20e020" shape-rendering="auto"/>
<path d="M168.500 107.500h2l4 4-4 4h-2z" fill="#fff" stroke="#000" stroke-width="1" shape-rendering="auto"/><path d="M167 110.500h2M167 113.500h2" stroke="#40a0e0" stroke-width="1"/>
<!-- G2: yellow cursor + -->
<path d="M205.500 102v12" stroke="#e0a800" stroke-width="2"/><rect x="200" y="113" width="11" height="4" fill="#ffe000" stroke="#b08000" stroke-width="1"/>
<path d="M208 106.500h6M211 103.500v6" stroke="#e0a800" stroke-width="1.500"/>
<path d="M227.500 102v11M229 106.500h5" stroke="#e0b000" stroke-width="1" stroke-dasharray="1 1"/><rect x="221" y="113" width="12" height="4" fill="url(#dy2)"/>
<!-- green step + blue arrows -->
<path d="M243 103.500h5.500v13h9.500" stroke="#108020" stroke-width="1" fill="none"/><path d="M250 109l4.500-4v3h4.500v2.500h-4.500v3z" fill="#2000d0" shape-rendering="auto"/>
<path d="M281 103.500h-5.500v13h-9.500" stroke="#108020" stroke-width="1" fill="none"/><path d="M274 109l-4.500-4v3h-4.500v2.500h4.500v3z" fill="#2000d0" shape-rendering="auto"/>
<!-- dotted steps -->
<g stroke="#108020" stroke-width="1" fill="none" stroke-dasharray="1 1">
<path d="M287 103.500h5M292.500 104v12M293 116.500h10"/>
<path d="M309 103.500h8M317.500 104v12M318 116.500h7"/>
<path d="M346 103.500h-9M336.500 104v12M336 116.500h-5"/>
<path d="M368 103.500h-5M362.500 104v12M362 116.500h-9"/>
</g>
<g fill="#5030e0" shape-rendering="crispEdges">
<path d="M291 108h1v-1h1v1h1v1h-1v1h-1v-1h-1zM295 112h1v-1h1v1h1v1h-1v1h-1v-1h-1z"/>
<path d="M316 108h1v-1h1v1h1v1h-1v1h-1v-1h-1zM312 112h1v-1h1v1h1v1h-1v1h-1v-1h-1z"/>
<path d="M335 108h1v-1h1v1h1v1h-1v1h-1v-1h-1zM339 112h1v-1h1v1h1v1h-1v1h-1v-1h-1z"/>
<path d="M361 108h1v-1h1v1h1v1h-1v1h-1v-1h-1zM357 112h1v-1h1v1h1v1h-1v1h-1v-1h-1z"/>
</g>
<g fill="#f0f0f0"><rect x="292" y="108" width="1" height="1"/><rect x="296" y="112" width="1" height="1"/><rect x="317" y="108" width="1" height="1"/><rect x="313" y="112" width="1" height="1"/><rect x="336" y="108" width="1" height="1"/><rect x="340" y="112" width="1" height="1"/><rect x="362" y="108" width="1" height="1"/><rect x="358" y="112" width="1" height="1"/></g>
<!-- G3 -->
<g shape-rendering="auto" fill="none">
<path d="M393 103l5 3.500-4 3M393 116l5-3.500-4-3M393 106.500l2 1.500M393 112l2-1.500" stroke="#000" stroke-width="1"/>
<path d="M408 110.500h-8M403 107.500l-3 3 3 3M406 108l-2.500 2.500 2.500 2.500" stroke="#1e6aff" stroke-width="1.200"/>
<path d="M414 110l1.500 1.500 1.500-1.500M445 110l1.500 1.500 1.500-1.500" stroke="#000" stroke-width="1"/>
<path d="M439 103l-5 3.500 4 3M439 116l-5-3.500 4-3M439 106.500l-2 1.500M439 112l-2-1.500" stroke="#000" stroke-width="1"/>
<path d="M424 110.500h8M429 107.500l3 3-3 3M426 108l2.500 2.500-2.500 2.500" stroke="#1e6aff" stroke-width="1.200"/>
<path d="M462.500 105.500l5 5-5 5-5-5z" stroke="#000" stroke-width="1" stroke-dasharray="1 1"/>
<path d="M462.500 107.500v6M459.500 110.500h6" stroke="#10d010" stroke-width="1.500"/>
<path d="M455 104.500h6M455 110.500h2M455 116.500h6" stroke="#000" stroke-width="1" stroke-dasharray="1 1"/>
<path d="M469.500 109l1.500 1.500-1.500 1.500-1.500-1.500z" fill="#2030ff" stroke="none"/>
</g>
<path d="M654 105h11l-5.500 6z" fill="url(#dk2b)"/><path d="M654 105.500h11" stroke="#000" stroke-width="1"/>
<!-- dithered binoculars -->
<path d="M676 102h4v2h2v-2h4l2 5v6h-5v-5h-2v5h-5v-6z" fill="url(#dk2)"/><path d="M672 114l3.500-3.500 3.500 3.500-3.500 3.500z" fill="url(#dbl)"/>
<path d="M693 102h4v2h2v-2h4l2 5v6h-5v-5h-2v5h-5v-6z" fill="url(#dk2)"/><path d="M707 114l-3.500-3.500-3.500 3.500 3.500 3.500z" fill="url(#dbl)"/>
<path d="M714 104l6-3 6 4-3 2-2-1-4 6h-3z" fill="url(#dk2)"/><path d="M720 115l6-6 2 2-6 6z" fill="#a8c8f0" shape-rendering="auto"/><path d="M725 105l3 3" stroke="#d0d0d0" stroke-width="2" shape-rendering="auto"/>
</svg>
<svg style="left:0;top:95px" width="1366" height="32" viewBox="0 95 1366 32">
<!-- G4 zoom -->
<circle cx="760" cy="107" r="5.300" fill="#fff" stroke="#000" stroke-width="1.300"/><path d="M757 107h6M760 104v6" stroke="#000" stroke-width="1.600"/><path d="M764.500 111.500l4.500 4.500" stroke="#1010c0" stroke-width="2.600"/>
<circle cx="782" cy="107" r="5.300" fill="#fff" stroke="#000" stroke-width="1.300"/><path d="M779 107h6" stroke="#000" stroke-width="1.600"/><path d="M786.500 111.500l4.500 4.500" stroke="#1010c0" stroke-width="2.600"/>
<circle cx="804" cy="107" r="5.500" fill="#0a3c78" stroke="#000" stroke-width="1.300"/><path d="M800.500 106q1-3 4-3" stroke="#fff" stroke-width="1.300" fill="none"/><path d="M808.500 111.500l4.500 4.500" stroke="#1010c0" stroke-width="2.600"/>
<g shape-rendering="crispEdges"><path d="M825 102v12" stroke="#e8a800" stroke-width="2"/><rect x="820" y="113" width="11" height="5" fill="#f0f0f0" stroke="#e8a800" stroke-width="2"/>
<path d="M846 106v8M855 106v8" stroke="#e8a800" stroke-width="2"/><rect x="842" y="113" width="7" height="5" fill="#f0f0f0" stroke="#e8a800" stroke-width="2"/><rect x="851" y="113" width="7" height="5" fill="#f0f0f0" stroke="#e8a800" stroke-width="2"/>
<path d="M863.500 103v11M864 113.500h6M868 102.500h3" stroke="#0000a0" stroke-width="1" stroke-dasharray="1 1"/><path d="M864 102.500l1 1 1-1 1 1 1-1" stroke="#0000a0" stroke-width="1" fill="none"/>
<path d="M866 107.500h4M866 109.500h3" stroke="#0000a0" stroke-width="1" stroke-dasharray="1 1"/></g>
<circle cx="830.500" cy="105.500" r="3.200" fill="#c0c0c0" stroke="#000" stroke-width="1"/><path d="M832.500 108.500l2.500 3" stroke="#1030e0" stroke-width="2"/>
<circle cx="852.500" cy="105" r="3.200" fill="#c0c0c0" stroke="#000" stroke-width="1"/><path d="M854.500 108l2 3" stroke="#1030e0" stroke-width="2"/>
<path d="M869 107.500h4l3 3v3h-4l-3-3z" fill="#c8c8c8" stroke="#404040" stroke-width="0.800" stroke-dasharray="1 1"/><path d="M875 113.500l3.500 3.500" stroke="#1030e0" stroke-width="2"/>
<!-- G5 -->
<g shape-rendering="crispEdges">
<path d="M914.500 105v14M907 118.500h15" stroke="#108030" stroke-width="1.300"/>
<rect x="935" y="104" width="8" height="15" fill="#101080"/><path d="M932 118.500h5v-13h4v13h6" stroke="#20a040" stroke-width="1" fill="none"/>
<rect x="959" y="104" width="14" height="15" fill="#005000"/><path d="M958 118.500h3v-13h4v13h2v-13h4v13h3" stroke="#30a050" stroke-width="1" fill="none"/>
<rect x="993" y="104" width="16" height="16" fill="url(#db2)"/><path d="M1008 105.500h-8v13h-6" stroke="#30a040" stroke-width="1" fill="none" stroke-dasharray="1 1"/>
<rect x="1020" y="104" width="5" height="16" fill="url(#db2)"/><path d="M1020.500 104v14" stroke="#f0e000" stroke-width="1" stroke-dasharray="1 1"/>
<path d="M1016 118.500h4M1022.500 104v14M1024 105.500h6" stroke="#108020" stroke-width="1" stroke-dasharray="1 1" fill="none"/>
<path d="M1038 118.500h7M1045.500 118v-12M1046 105.500h6" stroke="#108020" stroke-width="1" stroke-dasharray="1 1" fill="none"/>
<path d="M1060 118.500h6M1068 105.500h6" stroke="#108020" stroke-width="1" stroke-dasharray="1 1" fill="none"/><path d="M1066.500 104v15" stroke="#f0e000" stroke-width="1" stroke-dasharray="1 1"/><path d="M1067.500 105v13" stroke="#108020" stroke-width="1" stroke-dasharray="1 1"/>
</g>
</svg>
<!-- WAVE AREA -->
<div class="a wht" style="left:3px;top:127px;width:1360px;height:580px"></div>
<div class="a" style="left:3px;top:127px;width:1px;height:600px;background:#fff"></div>
<div class="a gray" style="left:3px;top:130px;width:159px;height:18px"></div>
<div class="a gray" style="left:12px;top:151px;width:150px;height:490px"></div>
<div class="a gray" style="left:165px;top:130px;width:100px;height:18px"></div>
<div class="a gray" style="left:165px;top:151px;width:100px;height:490px"></div>
<div class="a blk" style="left:268px;top:130px;width:1074px;height:18px"></div>
<div class="a blk" style="left:268px;top:151px;width:1074px;height:490px"></div>
<div class="a gray" style="left:3px;top:644px;width:45px;height:22px"></div>
<div class="a gray" style="left:3px;top:666px;width:159px;height:17px"></div>
<div class="a gray" style="left:165px;top:666px;width:100px;height:17px"></div>
<div class="a blk" style="left:268px;top:644px;width:1074px;height:39px"></div>
<div class="a gray" style="left:1345px;top:130px;width:17px;height:18px"></div>
<div class="a gray" style="left:1345px;top:644px;width:17px;height:39px"></div>
<div class="a gray" style="left:1345px;top:686px;width:17px;height:19px"></div>
<div class="a" style="left:162px;top:130px;width:1px;height:575px;background:#a4a4a4"></div>
<div class="a" style="left:265px;top:130px;width:1px;height:575px;background:#a4a4a4"></div>
<div class="a" style="left:12px;top:641px;width:1330px;height:1px;background:#d4d4d4"></div>
<svg style="left:0;top:0" width="1366" height="768" viewBox="0 0 1366 768" shape-rendering="crispEdges">
<path d="M344.5 151V641M418.5 151V641M492.5 151V641M565.5 151V641M639.5 151V641M713.5 151V641M786.5 151V641M860.5 151V641M934.5 151V641M1008.5 151V641M1081.5 151V641M1155.5 151V641M1229.5 151V641M1302.5 151V641" stroke="#808080" stroke-width="1" fill="none"/>
<path d="M271 167.5H274.5V155.5H293.5V167.5H311.5V155.5H329.5V167.5H348.5V155.5H366.5V167.5H385.5V155.5H403.5V167.5H422.5V155.5H440.5V167.5H458.5V155.5H477.5V167.5H495.5V155.5H514.5V167.5H532.5V155.5H551.5V167.5H569.5V155.5H587.5V167.5H606.5V155.5H624.5V167.5H643.5V155.5H661.5V167.5H680.5V155.5H698.5V167.5H716.5V155.5H735.5V167.5H753.5V155.5H772.5V167.5H790.5V155.5H809.5V167.5H827.5V155.5H845.5V167.5H864.5V155.5H882.5V167.5H901.5V155.5H919.5V167.5H938.5V155.5H956.5V167.5H974.5V155.5H993.5V167.5H1011.5V155.5H1030.5V167.5H1048.5V155.5H1067.5V167.5H1085.5V155.5H1103.5V167.5H1122.5V155.5H1140.5V167.5H1159.5V155.5H1177.5V167.5H1196.5V155.5H1214.5V167.5H1232.5V155.5H1251.5V167.5H1269.5V155.5H1288" stroke="#00ff00" stroke-width="1" fill="none"/>
<path d="M271 184.5H1288M271 189.500H1288" stroke="#00ff00" stroke-width="1" fill="none"/>
<path d="M274.5 212.5V206.5H348.5V218.5H385.5V206.5H458.5V218.5H1288" stroke="#00ff00" stroke-width="1" fill="none"/>
<path d="M271 212.5H274" stroke="#ff0000" stroke-width="1" fill="none"/>
<rect x="271" y="131" width="1" height="16" fill="#ffd700"/>
<rect x="271" y="152" width="1" height="489" fill="#ffd700"/>
<rect x="271" y="644" width="1" height="22" fill="#ffd700"/>
<rect x="271" y="162" width="1" height="6" fill="#ff2000"/>
<rect x="271" y="179" width="1" height="6" fill="#ff2000"/>
<rect x="271" y="190" width="1" height="12" fill="#ff2000"/>
<path d="M289.5 647V651M307.5 647V651M326.5 647V651M344.5 647V651M363.5 644V651M381.5 647V651M399.5 647V651M418.5 647V651M436.5 647V651M455.5 644V651M473.5 647V651M492.5 647V651M510.5 647V651M528.5 647V651M547.5 644V651M565.5 647V651M584.5 647V651M602.5 647V651M621.5 647V651M639.5 644V651M657.5 647V651M676.5 647V651M694.5 647V651M713.5 647V651M731.5 644V651M750.5 647V651M768.5 647V651M786.5 647V651M805.5 647V651M823.5 644V651M842.5 647V651M860.5 647V651M879.5 647V651M897.5 647V651M915.5 644V651M934.5 647V651M952.5 647V651M971.5 647V651M989.5 647V651M1008.5 644V651M1026.5 647V651M1044.5 647V651M1063.5 647V651M1081.5 647V651M1100.5 644V651M1118.5 647V651M1137.5 647V651M1155.5 647V651M1173.5 647V651M1192.5 644V651M1210.5 647V651M1229.5 647V651M1247.5 647V651M1266.5 647V651M1284.5 644V651M1302.5 647V651M1321.5 647V651" stroke="#00ff00" stroke-width="1" fill="none"/>
<rect x="271" y="666" width="1068" height="1" fill="#808080"/>
<rect x="272.5" y="667.5" width="24" height="15" fill="none" stroke="#ffd700" stroke-width="1"/>
</svg>
<div class="t tl" style="left:415.5px;top:655px;width:80px;text-align:center">500000 ps</div>
<div class="t tl" style="left:599.5px;top:655px;width:80px;text-align:center">1000000 ps</div>
<div class="t tl" style="left:783.5px;top:655px;width:80px;text-align:center">1500000 ps</div>
<div class="t tl" style="left:968.5px;top:655px;width:80px;text-align:center">2000000 ps</div>
<div class="t tl" style="left:1152.5px;top:655px;width:80px;text-align:center">2500000 ps</div>
<div class="a" style="left:272px;top:652px;width:20px;height:14px;overflow:hidden"><div class="t tl" style="left:-11px;top:3px">0 ps</div></div>
<div class="t" style="left:274px;top:670px;font-size:11px;color:#ffd700;letter-spacing:-0.3px;-webkit-text-stroke:0.3px #ffd700">0 ps</div>
<!-- SIDE PANES -->
<div class="a" style="left:3px;top:129px;width:159px;height:1px;background:#c8c8c8"></div>
<div class="a" style="left:165px;top:129px;width:100px;height:1px;background:#c8c8c8"></div>
<svg style="left:12px;top:130px" width="30" height="18" viewBox="12 130 30 18">
<path d="M13 137.500l5.500-6.500h3l2.500 2.500-4 4z" fill="#e040fb" stroke="#9a18b8" stroke-width="0.8"/>
<rect x="22.5" y="136.5" width="6.500" height="7.500" fill="#18b040" stroke="#0a8028" stroke-width="1"/>
<circle cx="22.3" cy="137.300" r="3.700" fill="#00e8ff" stroke="#70b8d0" stroke-width="0.700"/>
<path d="M13 142l5-5 5 5-5 5z" fill="#0050ff"/>
<path d="M33 139h5.500l-2.750 3z" fill="#000"/>
</svg>
<svg style="left:31px;top:153.0px" width="17" height="17" viewBox="-8.500 -8.500 17 17">
<path d="M0 -7.500L-7.500 0 0 0z" fill="#74a4ff"/><path d="M0 -7.500L7.500 0 0 0z" fill="#4468d8"/>
<path d="M-7.500 0L0 7.500 0 0z" fill="#3858d0"/><path d="M7.500 0L0 7.500 0 0z" fill="#2c2cac"/>
<path d="M0 -3.600L3.600 0 0 3.600 -3.600 0z" fill="#2868ff"/></svg>
<div class="t sn" style="left:52px;top:156px;letter-spacing:0px">/es77/clk</div>
<div class="t sn" style="left:167px;top:156px">1</div>
<svg style="left:31px;top:170.0px" width="17" height="17" viewBox="-8.500 -8.500 17 17">
<path d="M0 -7.500L-7.500 0 0 0z" fill="#74a4ff"/><path d="M0 -7.500L7.500 0 0 0z" fill="#4468d8"/>
<path d="M-7.500 0L0 7.500 0 0z" fill="#3858d0"/><path d="M7.500 0L0 7.500 0 0z" fill="#2c2cac"/>
<path d="M0 -3.600L3.600 0 0 3.600 -3.600 0z" fill="#2868ff"/></svg>
<div class="t sn" style="left:52px;top:173px;letter-spacing:0.12px">/es77/reset</div>
<div class="t sn" style="left:167px;top:173px">0</div>
<svg style="left:31px;top:187.0px" width="17" height="17" viewBox="-8.500 -8.500 17 17">
<path d="M0 -7.500L-7.500 0 0 0z" fill="#74a4ff"/><path d="M0 -7.500L7.500 0 0 0z" fill="#4468d8"/>
<path d="M-7.500 0L0 7.500 0 0z" fill="#3858d0"/><path d="M7.500 0L0 7.500 0 0z" fill="#2c2cac"/>
<path d="M0 -3.600L3.600 0 0 3.600 -3.600 0z" fill="#2868ff"/></svg>
<div class="t sn" style="left:52px;top:190px;letter-spacing:0px">/es77/enable</div>
<div class="t sn" style="left:167px;top:190px">1</div>
<svg style="left:31px;top:204.0px" width="17" height="17" viewBox="-8.500 -8.500 17 17">
<path d="M0 -7.500L-7.500 0 0 0z" fill="#74a4ff"/><path d="M0 -7.500L7.500 0 0 0z" fill="#4468d8"/>
<path d="M-7.500 0L0 7.500 0 0z" fill="#3858d0"/><path d="M7.500 0L0 7.500 0 0z" fill="#2c2cac"/>
<path d="M0 -3.600L3.600 0 0 3.600 -3.600 0z" fill="#2868ff"/></svg>
<div class="t sn" style="left:52px;top:207px;letter-spacing:0.35px">/es77/out_vf</div>
<div class="t sn" style="left:167px;top:207px">0</div>
<div class="t sn" style="left:230px;top:134px;width:31px;text-align:right">Msgs</div>
<div class="a" style="left:15px;top:221px;width:143px;height:1px;background:#000"></div>
<div class="a" style="left:167px;top:221px;width:94px;height:1px;background:#000"></div>
<svg style="left:13px;top:218px" width="5" height="7" viewBox="0 0 5 7"><path d="M0.500 0.500l3 3-3 3z" fill="none" stroke="#000" stroke-width="0.800"/></svg>
<div class="t" style="left:130.500px;top:650px;font-size:11px;letter-spacing:0.7px">Now</div>
<div class="t" style="left:182px;top:650px;width:75px;text-align:right;font-size:11px">2760000 ps</div>
<div class="t sn" style="left:110.500px;top:670px;letter-spacing:0.3px">Cursor 1</div>
<div class="t sn" style="left:234.500px;top:670px;letter-spacing:0.4px">0 ps</div>
<!-- BOTTOM ICONS -->
<svg style="left:12px;top:648px" width="36" height="14" viewBox="12 648 36 14">
<text x="13" y="656.500" font-family="Liberation Sans" font-size="9" font-weight="bold" fill="#e0e0e0">A</text>
<text x="17.500" y="656.500" font-family="Liberation Sans" font-size="9" font-weight="bold" fill="#d0d0d0">V</text>
<path d="M13 657.500h10M15 655.500l-2 2 2 2M21 655.500l2 2-2 2" stroke="#3c8cf0" stroke-width="1.200" fill="none"/>
<rect x="24.500" y="650" width="10.500" height="9.500" fill="#e8eef8" stroke="#5a8ad8" stroke-width="1"/>
<rect x="24.500" y="650" width="10.500" height="2.500" fill="#5a90e0"/>
<path d="M26 654.500h4M26 657h3M31 654.500h3" stroke="#6a98e0" stroke-width="1"/>
<path d="M27.500 659.500l4-4" stroke="#5a90e0" stroke-width="3" stroke-linecap="round"/>
<circle cx="41.800" cy="655" r="5" fill="#4caf50" stroke="#8fd694" stroke-width="0.800"/>
<path d="M39.600 655h4.400M41.800 652.800v4.400" stroke="#fff" stroke-width="1.800"/>
</svg>
<svg style="left:14px;top:667px" width="40" height="16" viewBox="14 667 40 16">
<path d="M18.500 674v-2a2.800 2.800 0 0 1 5.600 0" stroke="#b4b4b4" stroke-width="1.300" fill="none"/>
<rect x="16" y="674" width="10" height="7" fill="#f4b93a" stroke="#d89a20" stroke-width="0.800"/><path d="M18.500 676v4M21 676v4M23.500 676v4" stroke="#d89a20" stroke-width="0.800"/>
<rect x="16.500" y="674.500" width="9" height="2" fill="#fad878"/>
<path d="M29.500 678.500l5.500-5.500" stroke="#5b94e8" stroke-width="3.600" stroke-linecap="round"/>
<path d="M35 673l2-2M36 669.500a2.500 2.500 0 1 0 3 3" stroke="#d8d8d8" stroke-width="1.600" fill="none"/>
<circle cx="45.900" cy="673.800" r="5" fill="#e8413c" stroke="#f09a96" stroke-width="0.800"/>
<rect x="43.200" y="672.800" width="5.400" height="2" fill="#fff"/>
</svg>
<!-- SCROLLBARS -->
<div class="a gray" style="left:3px;top:686px;width:9px;height:19px"></div>
<div class="a" style="left:12px;top:686px;width:150px;height:19px;background:#f9f9f9;border-bottom:1px solid #8c8c8c"></div>
<div class="a hsb" style="left:12px;top:686px;width:16px"></div>
<div class="a hsb" style="left:145px;top:686px;width:17px"></div>
<div class="a" style="left:165px;top:686px;width:100px;height:19px;background:#f9f9f9;border-bottom:1px solid #8c8c8c"></div>
<div class="a hsb" style="left:165px;top:686px;width:16px"></div>
<div class="a hsb" style="left:248px;top:686px;width:17px"></div>
<div class="a hsb" style="left:268px;top:686px;width:16px"></div>
<div class="a hsb" style="left:284px;top:686px;width:1041px"></div>
<div class="a hsb" style="left:1325px;top:686px;width:17px"></div>
<svg style="left:0;top:686px" width="1366" height="19" viewBox="0 686 1366 19">
<path d="M17 695l4-4v8zM170 695l4-4v8z" fill="#a0a0a0"/>
<path d="M156 695l-4-4v8zM259 695l-4-4v8z" fill="#a0a0a0"/>
<path d="M273 695l4-4v8zM1335.500 695l-4-4v8z" fill="#000"/>
</svg>
<!-- VERTICAL SCROLLBAR -->
<div class="a" style="left:1342px;top:130px;width:1px;height:575px;background:#a4a4a4"></div>
<div class="a vsb" style="left:1346px;top:151px;height:16px"></div>
<div class="a vsb" style="left:1346px;top:167px;height:458px"></div>
<div class="a vsb" style="left:1346px;top:625px;height:15px"></div>
<div class="a" style="left:1345px;top:641px;width:17px;height:1px;background:#b0b0b0"></div>
<svg style="left:1345px;top:151px" width="17" height="490" viewBox="1345 151 17 490">
<path d="M1353 158.500l-3.500 3.500h7zM1353 634l-3.500-3.500h7z" fill="#000"/>
</svg>
<!-- STATUS BAR -->
<div class="a" style="left:3px;top:707px;width:168px;height:19px;border-top:1px solid #a0a0a0;border-left:1px solid #a0a0a0;border-bottom:1px solid #fff;border-right:1px solid #fff"></div>
<div class="a" style="left:172px;top:707px;width:1175px;height:19px;border-top:1px solid #a0a0a0;border-left:1px solid #a0a0a0;border-bottom:1px solid #fff;border-right:1px solid #fff"></div>
<div class="t" style="left:8.500px;top:712px;font-size:11px;letter-spacing:0.1px">0 ps to 2898 ns</div>
<div class="t" style="left:178.500px;top:712px;font-size:11px;letter-spacing:0.05px">Now: 2,760 ns</div><div class="t" style="left:257.500px;top:712px;font-size:11px;letter-spacing:0.05px">Delta: 0</div>
<svg style="left:1353px;top:716px" width="10" height="10" viewBox="0 0 10 10"><path d="M0.500 9.500l9-9M4 9.500l5.500-5.500M7.500 9.500l2-2" stroke="#a8a8a8" stroke-width="1"/><path d="M1.500 9.500l8-8M5 9.500l4.500-4.500M8.500 9.500l1-1" stroke="#fff" stroke-width="1"/></svg>
<div class="a" style="left:0;top:726px;width:1366px;height:2px;background:#dfe7f2"></div>
<!-- TASKBAR -->
<div class="a" style="left:0;top:728px;width:1366px;height:40px;background:linear-gradient(90deg,#8598b4 0,#879ab6 50px,#a5bedc 95px,#a5bedc 1085px,#8499b5 1125px,#8499b5 100%)"></div>
<div class="a" style="left:0;top:728px;width:1366px;height:1px;background:#414d60"></div>
<div class="a" style="left:0;top:729px;width:1366px;height:1px;background:rgba(255,255,255,.35)"></div>
<!-- start orb -->
<div class="a" style="left:9px;top:730px;width:36px;height:36px;border-radius:18px;background:radial-gradient(circle at 50% 100%,#26d6f6 0,#1aa6d8 22%,#0d6fae 48%,#1c4f86 75%,#2f5a8c 100%);box-shadow:0 0 0 1px #1b426e,0 0 3px 1px rgba(255,255,255,.35)"></div>
<div class="a" style="left:11px;top:731px;width:32px;height:18px;border-radius:16px 16px 10px 10px/14px 14px 5px 5px;background:linear-gradient(rgba(255,255,255,.55),rgba(255,255,255,.12))"></div>
<svg style="left:14px;top:735px" width="28" height="27" viewBox="-0.500 0.500 22.500 21">
<path d="M3.500 2.200c3-1.600 5.500-1.500 8 0l-2 8c-2.500-1.400-5-1.400-8 0z" fill="#e8591c"/>
<path d="M12.800 2.800c3 1.500 5.500 1.200 8.200-.4l-2 8c-2.700 1.600-5.200 1.700-8.200.4z" fill="#7fba2a"/>
<path d="M1.200 11.600c3-1.500 5.500-1.400 8 0l-2 8c-2.500-1.400-5-1.400-8 0z" fill="#2f8fe0"/>
<path d="M10.400 12.200c3 1.500 5.500 1.200 8.200-.4l-2 8c-2.700 1.600-5.200 1.700-8.200.4z" fill="#f9bb1a"/>
</svg>
<!-- explorer -->
<svg style="left:72px;top:734px" width="34" height="31" viewBox="0 0 34 31">
<path d="M2 4.500q0-2 2-2h10q2 0 2.500 2h15q1.500 0 1.500 2v20q0 1.500-1.500 1.500h-28q-1.500 0-1.500-1.500z" fill="#f3dc8f" stroke="#d9b958" stroke-width="1"/>
<path d="M1.500 10.500q0-1.500 1.500-1.500h16l2-2.500h10q1.500 0 1.500 1.500v18.500q0 1.500-1.500 1.500h-28q-1.500 0-1.500-1.500z" fill="#fbeeb5" stroke="#dcc066" stroke-width="1"/>
<rect x="4.500" y="2.500" width="3" height="2" fill="#1fc43a"/><rect x="8" y="2.500" width="5" height="2" fill="#fff"/>
<rect x="13" y="5" width="3" height="2" fill="#d82020"/><rect x="16.500" y="5" width="5" height="2" fill="#fff"/>
<rect x="21.500" y="7" width="3" height="2" fill="#1e88f0"/><rect x="25" y="7" width="5" height="2" fill="#fff"/>
<path d="M5.500 19q0-2 2-2h19q2 0 2 2v10.500h-6v-7.500h-11v7.500h-6z" fill="#9fd8f5" stroke="#4aa6dc" stroke-width="1" fill-opacity=".92"/>
<path d="M6.500 19.500q0-1.500 1.500-1.500h18q1.500 0 1.500 1.500v1h-21z" fill="#e4f6ff"/>
<circle cx="8.500" cy="18.500" r="2.500" fill="#fff" fill-opacity=".9"/>
</svg>
<!-- media player -->
<svg style="left:136px;top:736px" width="30" height="27" viewBox="0 0 30 27">
<path d="M6 2.500l20-.5v23l-20-.5z" fill="#b6d6f0" stroke="#7fb0dc" stroke-width="1"/>
<path d="M3.500 2l20-.5v24l-20-.5z" fill="#a6cdee" stroke="#74a8d8" stroke-width="1"/>
<path d="M1.500 1.500h19.500v24h-19.500z" fill="#9cc7ec" stroke="#6aa2d6" stroke-width="1"/>
<circle cx="11.500" cy="13" r="8.300" fill="#f28a1e" stroke="#f6b060" stroke-width="0.800"/>
<path d="M8.500 8l8 5-8 5z" fill="#fff"/>
</svg>
<!-- chrome button -->
<div class="a tbtn" style="left:184px;width:59px"></div>
<svg style="left:198px;top:733px" width="30" height="30" viewBox="-15 -15 30 30">
<circle r="14.200" fill="#dd3b2c"/>
<path d="M0 0L-12.300 -7.100A14.200 14.200 0 0 0 -0.600 14.190L6.150 3.550z" fill="#42b549"/>
<path d="M0 0L-0.600 14.190A14.200 14.200 0 0 0 12.300 -7.100L0 -7.100z" fill="#fbd31b"/>
<path d="M-12.300 -7.100A14.200 14.200 0 0 1 12.300 -7.100L0 -7.100z" fill="#dd3b2c"/>
<circle r="6.700" fill="#f4f4f4"/><circle r="5.300" fill="#3a7fcf"/>
</svg>
<!-- eagle -->
<svg style="left:262px;top:732px" width="25" height="31" viewBox="0 0 25 31">
<path d="M14.500 1.500l-1 5 2.500-5.500-.8 6.500 3.500-6-1.800 7.500 3.800-5-2.500 7.500 3-3.500-3.500 9 5-2.500-1 3-6 2.500-2 4 3.500 2.500-13 .500 4.500-3.500-6-1.500-1.500 3.500-1-5 5.500-5 2-8 3-6.500z" fill="#f0322c"/>
<path d="M5 28.500h13l-2 1.500h-9z" fill="#7a8aa0" fill-opacity=".5"/>
</svg>
<!-- quartus 1 -->
<svg style="left:320px;top:731px" width="36" height="34" viewBox="0 0 36 34" id="qi">
<path d="M1.500 1.500h22a22 26 0 0 1 -22 30z" fill="#fff"/>
<path d="M5 1.500q8 10 -3 16M11 1.500q10 12 -9 22M17 1.500q8 16 -15 27M1.500 7q14 -2 22 -2M1.500 13q12 -1 20 -5M1.500 19q10 0 16 -6M1.500 25q8 0 10 -4" stroke="#1010ff" stroke-width="1" fill="none"/>
<path d="M1.500 32.500v-31h31" stroke="#000" stroke-width="1.500" fill="none"/>
<path d="M20 6.500l13 13-13 13-13-13z" fill="#000"/>
<path d="M20 9l10.500 10.500-10.500 10.500-10.500-10.500z" fill="none" stroke="#fff" stroke-width="1.400" stroke-dasharray="1.300 1.300"/>
<path d="M20 13.500l6 6-6 6-6-6z" fill="#8a8010"/>
<path d="M26 19.500l-6 6" stroke="#d02020" stroke-width="1"/>
</svg>
<!-- photo viewer -->
<div class="a tbtn" style="left:370px;width:59px"></div>
<svg style="left:383px;top:733px" width="32" height="27" viewBox="0 0 32 27">
<path d="M1 1h8v3h-5v5h-3zM31 1h-8v3h5v5h3zM1 26h8v-3h-5v-5h-3zM31 26h-8v-3h5v-5h3z" fill="#3f95dc"/>
<rect x="3.500" y="3" width="25" height="21" fill="#f2f2f2" stroke="#c8c8c8" stroke-width="0.800"/>
<rect x="5" y="4.500" width="22" height="18" fill="#7fb6e6"/>
<rect x="5" y="4.500" width="22" height="8" fill="#a8d2f2"/>
<path d="M5 14q5-5 10-2t12 1v3h-22z" fill="#4d8a55"/>
<rect x="5" y="16" width="22" height="6.500" fill="#3d7fb8"/>
<path d="M15 6q4-2 8 0-4 1.500-8 0z" fill="#fff" fill-opacity=".8"/>
</svg>
<!-- quartus 2 -->
<div class="a tbtn" style="left:431px;width:59px"></div>
<svg style="left:444px;top:731px" width="36" height="34" viewBox="0 0 36 34">
<path d="M1.500 1.500h22a22 26 0 0 1 -22 30z" fill="#fff"/>
<path d="M5 1.500q8 10 -3 16M11 1.500q10 12 -9 22M17 1.500q8 16 -15 27M1.500 7q14 -2 22 -2M1.500 13q12 -1 20 -5M1.500 19q10 0 16 -6M1.500 25q8 0 10 -4" stroke="#1010ff" stroke-width="1" fill="none"/>
<path d="M1.500 32.500v-31h31" stroke="#000" stroke-width="1.500" fill="none"/>
<path d="M20 6.500l13 13-13 13-13-13z" fill="#000"/>
<path d="M20 9l10.500 10.500-10.500 10.500-10.500-10.500z" fill="none" stroke="#fff" stroke-width="1.400" stroke-dasharray="1.300 1.300"/>
<path d="M20 13.500l6 6-6 6-6-6z" fill="#8a8010"/>
<path d="M26 19.500l-6 6" stroke="#d02020" stroke-width="1"/>
</svg>
<!-- modelsim -->
<div class="a tbtn" style="left:497px;width:56px"></div>
<div class="a tbtn" style="left:493px;width:55px;background:linear-gradient(135deg,rgba(255,255,255,.6) 0,rgba(255,255,255,.32) 45%,rgba(255,255,255,.12) 55%,rgba(255,255,255,.22) 100%),#a5bedc"></div>
<div class="a" style="left:505px;top:733px;width:29px;height:31px;background:#eef0f2"></div>
<div class="a" style="left:506px;top:734px;width:28px;height:4px;background:#0c0cf0"></div>
<div class="a" style="left:505px;top:742px;width:29px;height:1px;background:#b0b0b0"></div>
<svg style="left:506px;top:743px" width="27" height="20" viewBox="0 0 27 20"><path d="M0 0h6.500l7 8 7-8h6.500v19.500h-6v-11l-7.500 8.500-7.500-8.500v11h-6z" fill="#000"/></svg>
<!-- tray -->
<div class="t" style="left:1127px;top:741px;font-size:12px;color:#f2f5fa">IT</div>
<svg style="left:1150px;top:738px" width="120" height="22" viewBox="1150 738 120 22">
<path d="M1155 751l4.500-4.500 4.500 4.500z" fill="#f4f6fa"/>
<g fill="#fff" stroke="#5c6c84" stroke-width="0.500"><rect x="1176.300" y="751.500" width="2.600" height="2.700"/><rect x="1179.600" y="749.500" width="2.600" height="4.700"/><rect x="1182.900" y="747.500" width="2.600" height="6.700"/><rect x="1186.200" y="745.500" width="2.600" height="8.700"/><rect x="1189.500" y="743" width="2.600" height="11.200"/></g>
<path d="M1200.500 746.500h3l4-3.500v13l-4-3.500h-3z" fill="#fff" stroke="#5c6c84" stroke-width="0.600"/>
<path d="M1209.500 746.500q2 3 0 6M1212 744.500q3.500 5 0 10M1214.500 743q4.500 6.500 0 13" stroke="#fff" stroke-width="1.100" fill="none"/>
<path d="M1225 742v15" stroke="#fff" stroke-width="1.800"/>
<path d="M1226.500 743q3.500-1.500 6.500 0t6.500 0q-1 5-6.500 6.500-3.500 0-6.500 0z" fill="#fff" stroke="#5c6c84" stroke-width="0.500"/>
<rect x="1252" y="743" width="9" height="13" rx="1.500" fill="none" stroke="#fff" stroke-width="1.600"/>
<rect x="1254.500" y="741.200" width="4" height="2" fill="#fff"/>
<rect x="1254" y="749" width="5" height="5" fill="#fff"/>
</svg>
<div class="t" style="left:1271px;top:735px;width:80px;text-align:center;font-size:12px;color:#fff;letter-spacing:-0.3px">15:53</div>
<div class="t" style="left:1271px;top:752px;width:80px;text-align:center;font-size:12px;color:#fff;letter-spacing:-0.3px">21/05/2014</div>
<div class="a" style="left:1352px;top:729px;width:14px;height:39px;background:linear-gradient(90deg,#8e9db2 0,#6a7990 25%,#5a687e 100%);border-left:1px solid #4b5870"></div>
</body></html>
